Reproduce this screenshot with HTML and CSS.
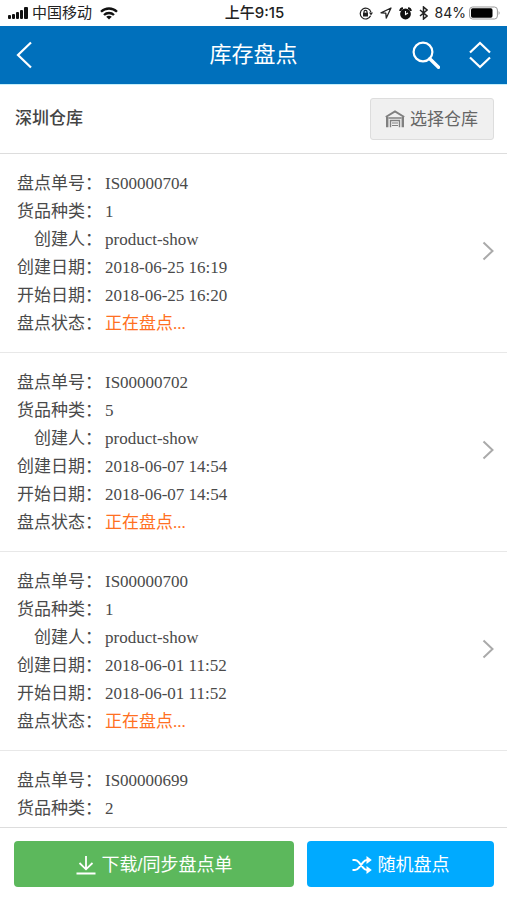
FILE: index.html
```html
<!DOCTYPE html>
<html lang="zh-CN">
<head>
  <meta charset="UTF-8">
  <meta name="viewport" content="width=device-width, initial-scale=1.0">
  <title>库存盘点</title>
  <link rel="stylesheet" href="styles.css">
</head>
<body>

  <div class="status-bar">
    <div class="status-left">
      <svg width="20" height="12" viewBox="0 0 20 12" fill="#111">
        <rect x="0" y="8" width="3" height="4" rx="1"/>
        <rect x="4" y="7" width="3" height="5" rx="1"/>
        <rect x="8" y="5" width="3" height="7" rx="1"/>
        <rect x="12" y="3" width="3" height="9" rx="1"/>
        <rect x="16" y="0" width="4" height="12" rx="1"/>
      </svg>
      <span class="carrier">中国移动</span>
      <svg class="wifi" width="18" height="13" viewBox="0 0 18 13" fill="none" stroke="#111" stroke-width="2.3">
        <path d="M1 4.8C5.5.4 12.5.4 17 4.8M4 8C6.8 5.3 11.2 5.3 14 8"/>
        <path d="M9 12.6L6.2 9.8C7.8 8.4 10.2 8.4 11.8 9.8Z" fill="#111" stroke="none"/>
      </svg>
    </div>
    <span class="time">上午9:15</span>
    <div class="status-right">
      <svg width="14" height="13" viewBox="0 0 14 13" fill="none" stroke="#222" stroke-width="1.2">
        <path d="M11.6 8.8A5.4 5.4 0 1 1 11.9 5.2"/>
        <path d="M10 5.6h4L12 8.6z" fill="#222" stroke="none"/>
        <rect x="4" y="5.7" width="5" height="3.8" fill="#222" stroke="none"/>
        <path d="M5 6V4.8a1.5 1.5 0 0 1 3 0V6"/>
      </svg>
      <svg width="12" height="12" viewBox="0 0 12 12" fill="none" stroke="#222" stroke-width="1.3" stroke-linejoin="round">
        <path d="M11 1L1 5.8l4.8.4.5 4.9z"/>
      </svg>
      <svg width="13" height="13" viewBox="0 0 13 13">
        <circle cx="6.5" cy="7" r="5.4" fill="#111"/>
        <path d="M1.2 4A3 3 0 0 1 4 1.2M9 1.2A3 3 0 0 1 11.8 4" fill="none" stroke="#111" stroke-width="2"/>
        <path d="M6.5 4v3.5L9 6" fill="none" stroke="#fff" stroke-width="1.1"/>
      </svg>
      <svg width="9" height="14" viewBox="0 0 9 14" fill="none" stroke="#222" stroke-width="1.5">
        <path d="M1 4l7 6-3.5 3V1L8 4l-7 6"/>
      </svg>
      <span class="percent">84%</span>
      <svg width="32" height="14" viewBox="0 0 32 14">
        <rect x=".6" y="1" width="27.8" height="12" rx="3" fill="#fff" stroke="#999"/>
        <rect x="2" y="2.3" width="21.5" height="9.4" rx="1.6" fill="#000"/>
        <path d="M29.6 5q2 2 0 4z" fill="#999"/>
      </svg>
    </div>
  </div>

  <header class="header">
    <button class="icon-button" aria-label="返回">
      <svg width="16" height="28" viewBox="0 0 16 28" fill="none" stroke="#fff" stroke-width="2.2">
        <path d="M15 1.5L2 14l13 12.5"/>
      </svg>
    </button>
    <h1>库存盘点</h1>
    <div class="header-actions">
      <button class="icon-button" aria-label="搜索">
        <svg width="28" height="28" viewBox="0 0 28 28" fill="none" stroke="#fff">
          <circle cx="11" cy="11" r="9.4" stroke-width="2.2"/>
          <path d="M17.8 17.8l8.7 8.4" stroke-width="3.4" stroke-linecap="round"/>
        </svg>
      </button>
      <button class="icon-button" aria-label="排序">
        <svg width="22" height="28" viewBox="0 0 22 28" fill="none" stroke="#fff" stroke-width="2.2">
          <path d="M1 11.5L11 2l10 9.5M1 16.5L11 26l10-9.5"/>
        </svg>
      </button>
    </div>
  </header>

  <section class="warehouse">
    <h2>深圳仓库</h2>
    <button class="select-button">
      <svg width="20" height="18" viewBox="0 0 20 18" fill="none" stroke="#808080">
        <path d="M.8 7L10 1.4 19.2 7" stroke-width="2"/>
        <path d="M2.2 7v10.3M17.8 7v10.3" stroke-width="2.4"/>
        <path d="M3.500 8h13M5.5 17.3v-6.800h9v6.8" stroke-width="1.4"/>
        <path d="M7 13h6M7 15.500h6"/>
      </svg>
      选择仓库
    </button>
  </section>

  <main class="list">
    <a class="item" href="#">
      <dl>
        <dt>盘点单号：</dt><dd>IS00000704</dd>
        <dt>货品种类：</dt><dd>1</dd>
        <dt>创建人：</dt><dd>product-show</dd>
        <dt>创建日期：</dt><dd>2018-06-25 16:19</dd>
        <dt>开始日期：</dt><dd>2018-06-25 16:20</dd>
        <dt>盘点状态：</dt><dd class="state">正在盘点...</dd>
      </dl>
      <svg class="arrow" width="12" height="20" viewBox="0 0 12 20" fill="none" stroke="#aaa" stroke-width="2">
        <path d="M1.5 1.5L10.5 10l-9 8.5"/>
      </svg>
    </a>
    <a class="item" href="#">
      <dl>
        <dt>盘点单号：</dt><dd>IS00000702</dd>
        <dt>货品种类：</dt><dd>5</dd>
        <dt>创建人：</dt><dd>product-show</dd>
        <dt>创建日期：</dt><dd>2018-06-07 14:54</dd>
        <dt>开始日期：</dt><dd>2018-06-07 14:54</dd>
        <dt>盘点状态：</dt><dd class="state">正在盘点...</dd>
      </dl>
      <svg class="arrow" width="12" height="20" viewBox="0 0 12 20" fill="none" stroke="#aaa" stroke-width="2">
        <path d="M1.5 1.5L10.5 10l-9 8.5"/>
      </svg>
    </a>
    <a class="item" href="#">
      <dl>
        <dt>盘点单号：</dt><dd>IS00000700</dd>
        <dt>货品种类：</dt><dd>1</dd>
        <dt>创建人：</dt><dd>product-show</dd>
        <dt>创建日期：</dt><dd>2018-06-01 11:52</dd>
        <dt>开始日期：</dt><dd>2018-06-01 11:52</dd>
        <dt>盘点状态：</dt><dd class="state">正在盘点...</dd>
      </dl>
      <svg class="arrow" width="12" height="20" viewBox="0 0 12 20" fill="none" stroke="#aaa" stroke-width="2">
        <path d="M1.5 1.5L10.5 10l-9 8.5"/>
      </svg>
    </a>
    <a class="item" href="#">
      <dl>
        <dt>盘点单号：</dt><dd>IS00000699</dd>
        <dt>货品种类：</dt><dd>2</dd>
      </dl>
    </a>
  </main>

  <footer class="footer">
    <button class="download">
      <svg width="20" height="20" viewBox="0 0 20 20" fill="none" stroke="#fff" stroke-width="1.8">
        <path d="M10 1v13M3.5 8l6.5 6.3L16.5 8M.5 18.5h19"/>
      </svg>
      下载/同步盘点单
    </button>
    <button class="random">
      <svg width="20" height="18" viewBox="0 0 20 18" fill="none" stroke="#fff" stroke-width="2">
        <path d="M.5 4H3c2 0 3 1.2 4.200 2.700l3.600 4.600C12 12.800 13 14 15 14h1.500M.5 14H3c2 0 3-1.200 4.200-2.700l3.600-4.600C12 5.200 13 4 15 4h1.500"/>
        <path d="M14.500 0l5.300 4-5.300 4zM14.500 10l5.300 4-5.300 4z" fill="#fff" stroke="none"/>
      </svg>
      随机盘点
    </button>
  </footer>

</body>
</html>
```
FILE: styles.css
```css
* {
  box-sizing: border-box;
}
body {
  margin: 0;
  height: 100vh;
  display: flex;
  flex-direction: column;
  font-family: "Liberation Sans", "Noto Sans CJK SC", sans-serif;
  background-color: #fff;
  color: #444;
}
h1, h2, dl, dd {
  margin: 0;
}
svg {
  display: block;
  flex: none;
}
button {
  font-family: inherit;
  cursor: pointer;
}

/* phone status bar */
.status-bar {
  height: 26px;
  padding: 0 6px 0 8px;
  display: grid;
  grid-template-columns: 1fr auto 1fr;
  align-items: center;
  font-family: Inter, "Noto Sans CJK SC", sans-serif;
  font-size: 14px;
  line-height: 26px;
  color: #222;
}
.status-left, .status-right {
  display: flex;
  align-items: center;
  gap: 4px;
}
.status-right {
  justify-content: flex-end;
  gap: 7px;
}
.wifi {
  margin-left: 4px;
}
.carrier {
  font-size: 15px;
}
.time {
  font-size: 15px;
  font-weight: 500;
}
.percent {
  margin-right: -4px;
}

.header {
  height: 58px;
  padding: 0 16px;
  display: grid;
  grid-template-columns: 1fr auto 1fr;
  align-items: center;
  background-color: #0070bc;
  color: #fff;
}
.header h1 {
  font-size: 22px;
  font-weight: 400;
  line-height: 32px;
}
.header-actions {
  display: flex;
  justify-content: flex-end;
  gap: 29px;
}
.icon-button {
  padding: 0;
  border: 0;
  background: none;
  justify-self: start;
}

.warehouse {
  padding: 13px 13px 13px 15px;
  display: flex;
  align-items: center;
  justify-content: space-between;
  border-top: 1px solid #c5effb;
  border-bottom: 1px solid #ddd;
}
.warehouse h2 {
  font-size: 17px;
  font-weight: 500;
  line-height: 28px;
}
.select-button {
  height: 42px;
  padding: 0 15px 4px 14px;
  display: flex;
  align-items: center;
  gap: 5px;
  border: 1px solid #ddd;
  border-radius: 3px;
  background-color: #f0f0f0;
  font-size: 17px;
  color: #666;
}
.select-button svg {
  margin-top: 4px;
}

.list {
  flex: 1;
  min-height: 0;
  overflow: hidden;
}
.item {
  padding: 16px 13px 14px 17px;
  display: flex;
  align-items: center;
  justify-content: space-between;
  border-bottom: 1px solid #e8e8e8;
  color: #4a4a4a;
  text-decoration: none;
}
.item dl {
  display: grid;
  grid-template-columns: auto 1fr;
  column-gap: 3px;
  font-family: "Liberation Serif", "Noto Sans CJK SC", serif;
  font-size: 17px;
  line-height: 28px;
}
.item dt {
  text-align: right;
}
.item .state {
  color: #ff7022;
}
.arrow {
  margin-bottom: 6px;
}

.footer {
  padding: 13px 13px 13px 14px;
  display: grid;
  grid-template-columns: 3fr 2fr;
  gap: 13px;
  border-top: 1px solid #ddd;
}
.footer button {
  height: 46px;
  padding: 0 0 2px;
  display: flex;
  align-items: center;
  justify-content: center;
  gap: 6px;
  border: 0;
  border-radius: 4px;
  font-size: 18px;
  color: #fff;
}
.footer svg {
  margin-top: 4px;
}
.download {
  background-color: #5cb85c;
}
.random {
  background-color: #00aaff;
}
```
